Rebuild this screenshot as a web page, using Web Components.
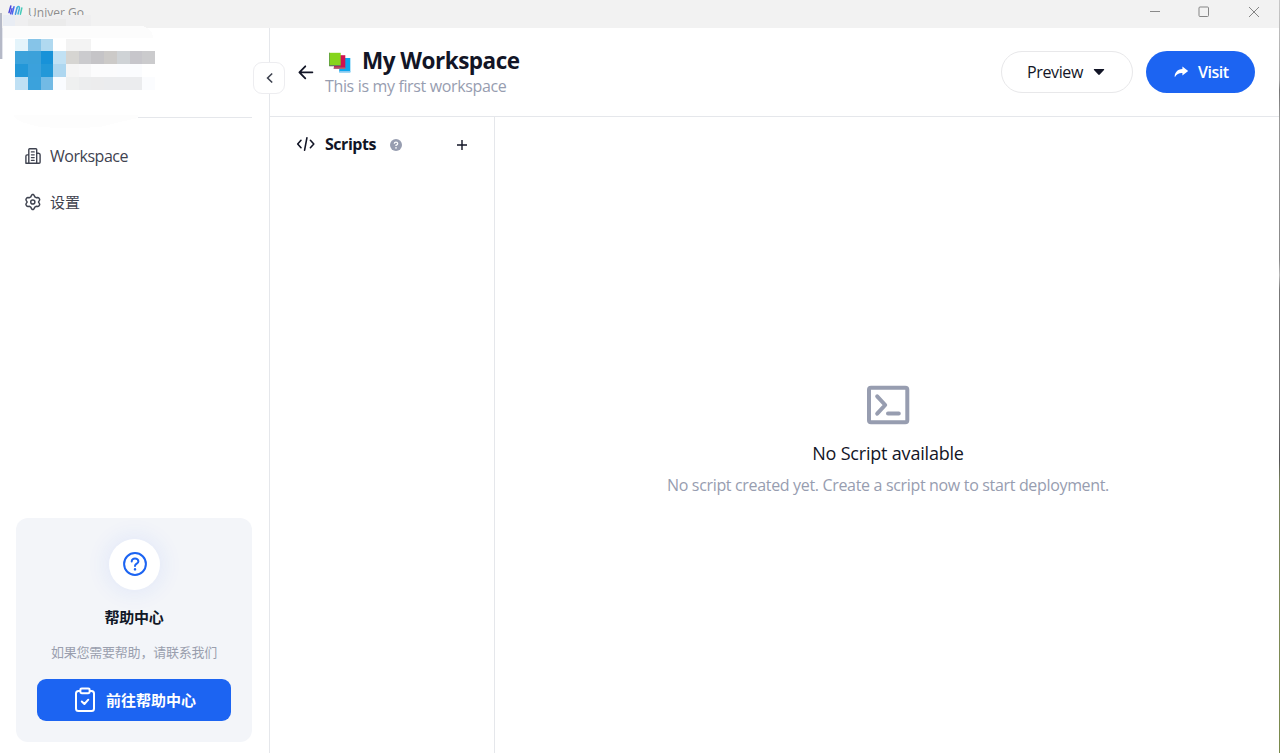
<!DOCTYPE html>
<html lang="zh-CN">
<head>
<meta charset="utf-8">
<title>Univer Go</title>
<style>
html,body{margin:0;height:100%;overflow:hidden;background:#fff}
body{font-family:"Open Sans","Noto Sans CJK SC",sans-serif;color:#111827}
</style>
</head>
<body>
<univer-app></univer-app>
<script>
const define = (name, html, ready) => customElements.define(name, class extends HTMLElement {
  constructor() {
    super();
    const t = document.createElement('template');
    t.innerHTML = html;
    this.attachShadow({ mode: 'open' }).append(t.content.cloneNode(true));
  }
  connectedCallback() { if (ready) ready(this); }
});

/* A single line of text, tracked so that it spans the given width. */
define('ui-text', `<style>:host{display:block;white-space:nowrap;width:max-content}span{display:inline-block}</style><span><slot></slot></span>`, el => {
  const w = parseFloat(el.getAttribute('span'));
  if (!w) return;
  const fit = () => {
    el.style.letterSpacing = '0px';
    const s = el.shadowRoot.querySelector('span');
    const n = el.textContent.length;
    el.style.letterSpacing = ((w - s.getBoundingClientRect().width) / n) + 'px';
  };
  fit();
  requestAnimationFrame(fit);
});

define('title-bar', `<style>
:host{display:flex;height:28px;background:#f2f2f2;align-items:flex-start}
.logo{margin:5px 0 0 8px;flex:none}
ui-text{margin:4px 0 0 5px;font-size:12px;line-height:17px;color:#8d8d8d}
.win{margin-left:auto;display:flex;padding-right:20px}
.win svg{margin-top:6px;display:block}
.win svg+svg{margin-left:37px}
.win svg:last-child{margin-left:38px}
</style>
<svg class="logo" width="15" height="11" viewBox="0 0 15 11" fill="none" stroke-linecap="round" stroke-linejoin="round" stroke-width="1.5">
<path d="M2.8 1L1 7.6" stroke="#4a45d8"/><path d="M4 3.6L2.6 8.8" stroke="#5a55e2"/><path d="M6 1.8L4.2 9" stroke="#4a68ee"/>
<path d="M9 3L7.4 9.3" stroke="#4a9ae0"/><path d="M9 3Q9.8 1 11 1.6Q11.8 2.2 11.3 4L10 9" stroke="#40b4d8"/><path d="M13.8 3L12.4 9.2" stroke="#46cbb8"/></svg>
<ui-text span="56">Univer Go</ui-text>
<div class="win">
<svg width="12" height="12"><path d="M1 5.5H11" stroke="#8a8a8a"/></svg>
<svg width="12" height="12"><rect x="1" y="1" width="9.5" height="9.5" rx="1" fill="none" stroke="#858585"/></svg>
<svg width="12" height="12"><path d="M1 1L11 11M11 1L1 11" stroke="#858585"/></svg>
</div>`);

/* Account block, shown pixelated for privacy. */
define('account-mask', `<style>:host{display:block;position:absolute;left:0;top:0;z-index:3}svg{display:block}</style>
<svg width="170" height="130" shape-rendering="crispEdges">
<path d="M3 15H28L40 18L55 15H91V26H3Z" fill="#efeff0"/>
<path d="M3 15H15V26H3Z" fill="#e9edf4"/>
<path d="M28 19H66V26H28Z" fill="#ebebeb"/>
<path d="M3 26H143Q153 29 153 38H3Z" fill="#fcfcfc"/>
<path d="M14 115H138V118Q118 122 100 127Q70 129 40 127Q20 123 14 117Z" fill="#fdfdfd"/>
<rect y="13" width="2" height="46" fill="#b5b9c7"/>
<rect x="2" y="28" width="1" height="31" fill="#e3e5ec"/>
<g id="m"></g></svg>`, el => {
  const xs = [15, 28, 41, 53, 66, 79, 91, 104, 117, 130, 142, 155];
  const ys = [39, 51, 64, 77, 90];
  const rows = [
    '#e4f4fb #86c4e8 #b0d9f0 #fff #f3f3f3 #f3f3f3',
    '#3ba2db #3ba1da #1892d8 #c1e1f4 #d6d5d2 #cbcbce #c5c4c7 #cccac8 #cfd3d6 #c7c6cb #cbcbcd',
    '#2397d8 #3ba1dc #2398d8 #aed7f0 #f5f5f5 #f7f7f8 #fcfcfd #fcfcfd #fbfcfe #fbfcfe',
    '#bfe0f4 #3ba2dc #72bae5 #fafcff #eff0f0 #ecedee #ececed #ebecee #ebecee #ebecee #fbfcfe'
  ];
  let out = '';
  rows.forEach((r, j) => r.split(' ').forEach((c, i) => {
    const x = xs[i], w = (i < 10 ? xs[i + 1] : 155) - x;
    out += `<rect x="${x}" y="${ys[j]}" width="${w}" height="${ys[j + 1] - ys[j]}" fill="${c}"/>`;
  }));
  el.shadowRoot.getElementById('m').innerHTML = out;
});

define('nav-item', `<style>:host{display:flex;align-items:center;height:24px;font-size:16px;line-height:24px;color:#3f4350}
::slotted(svg){flex:none;margin-right:9px}</style><slot name="icon"></slot><slot></slot>`);

define('help-card', `<style>
:host{display:flex;flex-direction:column;align-items:center;width:236px;height:224px;box-sizing:border-box;padding-top:21px;border-radius:12px;background:#f3f5f9}
.ring{width:51px;height:51px;border-radius:50%;background:#fff;display:flex;justify-content:center;box-shadow:0 0 24px rgba(40,90,245,.11)}
.ring svg{margin:12px 0 0 1px}
.t{font-weight:700;font-size:15px;line-height:22px;margin-top:16px;color:#111827}
.s{font-size:13px;line-height:20px;margin-top:14px;color:#9a9fae}
button{all:unset;box-sizing:border-box;display:flex;align-items:center;width:194px;height:42px;margin-top:17px;padding-left:37px;background:#1c64f2;color:#fff;border-radius:9px;font-weight:700;font-size:15px;line-height:22px}
button svg{margin-right:10px}
</style>
<div class="ring"><svg width="26" height="26" viewBox="0 0 26 26" fill="none" stroke="#1c64f2" stroke-width="2" stroke-linecap="round"><circle cx="13" cy="13" r="10.9"/><path d="M9.7 10.6C9.7 8.6 11.2 7.6 13 7.6S16.4 8.8 16.4 10.4C16.4 12.6 13 12.7 13 14.9"/><path d="M13 18.3v.1" stroke-width="2.4"/></svg></div>
<ui-text class="t" span="59">帮助中心</ui-text>
<ui-text class="s" span="166">如果您需要帮助，请联系我们</ui-text>
<button><svg width="22" height="26" viewBox="0 0 22 26" fill="none" stroke="#fff" stroke-width="2" stroke-linejoin="round" stroke-linecap="round"><path d="M6.3 4H4.5Q2 4 2 6.5V21.5Q2 24 4.5 24H17.5Q20 24 20 21.5V6.5Q20 4 17.5 4H15.7"/><rect x="6.3" y="1.6" width="9.4" height="4.6" rx="1.4"/><path d="M7.8 14.5L10.4 17L14.3 12.7"/></svg><ui-text span="90">前往帮助中心</ui-text></button>`);

define('side-bar', `<style>
:host{display:flex;flex-direction:column;width:269px;border-right:1px solid #e5e7eb;flex:none;position:relative}
.acct{height:89px;margin:0 17px 0 16px;border-bottom:1px solid #e5e7eb}
nav{display:flex;flex-direction:column;gap:22px;padding:26px 0 0 24px}
help-card{margin:auto 0 11px 16px}
.col{position:absolute;left:253px;top:34px;width:32px;height:32px;box-sizing:border-box;border:1px solid #ededf0;border-radius:9px;background:#fff;display:grid;place-items:center;z-index:4}
.col svg{margin-left:1px}
</style>
<div class="acct"></div>
<nav>
<nav-item><svg slot="icon" width="17" height="18" viewBox="0 0 17 18" fill="none" stroke="#3f4350" stroke-width="1.4" stroke-linejoin="round" stroke-linecap="round"><path d="M4.8 16.2V2.5Q4.8 1.7 5.6 1.7H11.9Q12.7 1.7 12.7 2.5V16.2M1.9 16.2V9.2Q1.9 8 3.1 7.9H4.8M12.7 6.2H14.5Q16.1 6.3 16.1 7.8V15.2Q16.1 16.2 15.1 16.2H2.9Q1.9 16.2 1.9 15.2"/><path d="M7.4 4.9H10.2M7.4 7.8H10.2M7.4 10.6H10.2M7.4 13.3H10.2" stroke-width="1.3"/></svg><ui-text span="78">Workspace</ui-text></nav-item>
<nav-item><svg slot="icon" width="17" height="18" viewBox="0.6 1 22 22" fill="none" stroke="#3f4350" stroke-width="1.9" stroke-linejoin="round"><circle cx="12" cy="12" r="2.7"/><path d="M10 4L11 2.3H13L14 4L14.6 5.4L16.3 6.4L18.3 6.2L19.9 6.8L20.9 8.6L20.5 10.2L19.5 11.5V12.5L20.5 13.8L20.9 15.4L19.9 17.2L18.3 17.8L16.3 17.6L14.6 18.6L14 20L13 21.7H11L10 20L9.4 18.6L7.7 17.6L5.7 17.8L4.1 17.2L3.1 15.4L3.5 13.8L4.5 12.5V11.5L3.5 10.2L3.1 8.6L4.1 6.8L5.7 6.2L7.7 6.4L9.4 5.4Z"/></svg><ui-text style="font-size:15px" span="30">设置</ui-text></nav-item>
</nav>
<help-card></help-card>
<div class="col"><svg width="8" height="12" viewBox="0 0 8 12"><path d="M6.2 1.5L1.6 6L6.2 10.5" fill="none" stroke="#3f4350" stroke-width="1.6"/></svg></div>`);

define('work-header', `<style>
:host{display:flex;height:88px;border-bottom:1px solid #e5e7eb;align-items:flex-start}
.back{margin:36px 0 0 28px;flex:none}
.info{margin:19px 0 0 11px}
.row{display:flex;align-items:center;height:28px}
.row svg{margin:4px 0 0 4px}
h1{margin:0 0 0 10px;font-weight:700;font-size:22.5px;line-height:28px;color:#121526}
.sub{font-size:16px;line-height:22px;color:#979db0}
.acts{margin:23px 25px 0 auto;display:flex;gap:13px}
button{all:unset;box-sizing:border-box;height:42px;display:flex;align-items:center;border-radius:21px;font-size:16px;line-height:24px}
.p{width:132px;border:1px solid #e8e8ea;padding-left:25px;gap:10px;color:#121526}
.v{width:109px;background:#1c64f2;color:#fff;padding-left:28px;gap:9px;font-weight:600}
</style>
<svg class="back" width="16" height="16" viewBox="0 0 16 16" fill="none" stroke="#121526" stroke-width="1.8" stroke-linecap="round" stroke-linejoin="round"><path d="M14.4 8.3H1.5M7.3 2.3L1.4 8.3L7.3 14.3"/></svg>
<div class="info"><div class="row">
<svg width="23" height="22" viewBox="0 0 23 22"><path d="M10.2 6H21.3V20.3H10.2Z" fill="#0da7ee"/><path d="M10.2 19H21.3V20.5H10.2Z" fill="#8bc8ef"/><path d="M5 3.2H16.3V16H5Z" fill="#cf124f"/><path d="M4.6 15.4H16.3V17H4.6Z" fill="#a96b79"/><path d="M.2 .8H11.7V13.2H.2Z" fill="#86d51c"/><path d="M.2 13H11.7V14.3H.2Z" fill="#667b61"/><path d="M0 .8H.8V14H0Z" fill="#5b9a3e"/></svg>
<h1><ui-text span="157.5">My Workspace</ui-text></h1></div>
<ui-text class="sub" span="181.5">This is my first workspace</ui-text></div>
<div class="acts"><button class="p"><ui-text span="56">Preview</ui-text><svg width="12" height="8" viewBox="0 0 12 8"><path d="M1.2 1H10.8Q11.6 1.3 11 2L6.8 6.6Q6 7.3 5.2 6.6L1 2Q.4 1.3 1.2 1Z" fill="#121526"/></svg></button>
<button class="v"><svg width="15" height="12" viewBox="0 0 15 12"><path d="M8.4 .4L14.2 4.9L8.4 9.4V6.9C5.2 6.7 2.8 7.8 .8 11.3C.2 7 3.3 3.1 8.4 2.9Z" fill="#fff"/></svg><ui-text span="30.5">Visit</ui-text></button></div>`);

define('script-panel', `<style>
:host{display:block;width:224px;border-right:1px solid #e5e7eb;flex:none}
.bar{display:flex;align-items:center;height:24px;margin-top:15px;padding-left:26px}
ui-text{font-size:16px;line-height:24px;font-weight:700;color:#121526;margin-left:10px}
.q{margin-left:14px}.plus{margin-left:54px}
.q,.plus{position:relative;top:.5px}
</style>
<div class="bar"><svg width="19" height="16" viewBox="0 0 19 16" fill="none" stroke="#121526" stroke-width="1.6" stroke-linecap="round" stroke-linejoin="round"><path d="M5 4.3L1.7 8L5 11.7M14.4 4.3L17.8 8L14.4 11.7M10.9 1.9L8.6 14.1"/></svg>
<ui-text span="51">Scripts</ui-text>
<svg class="q" width="12" height="12" viewBox="0 0 12 12"><circle cx="6" cy="6" r="6" fill="#979db0"/><path d="M4.3 4.8Q4.4 3.2 6 3.2T7.7 4.7Q7.6 5.6 6 6.3V7.1" fill="none" stroke="#fff" stroke-width="1.3"/><circle cx="6" cy="8.9" r=".8" fill="#fff"/></svg>
<svg class="plus" width="12" height="12"><path d="M6 1V11M1 6H11" stroke="#121526" stroke-width="1.4" fill="none"/></svg></div>`);

define('empty-state', `<style>
:host{display:flex;flex:1;flex-direction:column;align-items:center;padding-top:268px;margin-left:1px}
.t{font-size:18px;line-height:26px;color:#121526;margin-top:15px}
.s{font-size:16px;line-height:24px;color:#979db0;margin-top:7px}
</style>
<svg width="44" height="40" viewBox="0 0 44 40" fill="none" stroke="#979db0" stroke-width="4" stroke-linecap="round" stroke-linejoin="round"><rect x="3" y="2.8" width="38.3" height="34.4" rx="2"/><path d="M11.2 11.3L19.2 20L11.2 28.7M22 28.5H32.8"/></svg>
<ui-text class="t" span="151.5">No Script available</ui-text>
<ui-text class="s" span="442">No script created yet. Create a script now to start deployment.</ui-text>`);

define('univer-app', `<style>
:host{display:flex;flex-direction:column;width:1280px;height:753px;position:relative;overflow:hidden;background:#fff}
.body,.work{display:flex;flex:1;min-height:0}
main{display:flex;flex-direction:column;flex:1;min-width:0}
.edge{position:absolute;right:0;top:0;width:1px;height:100%;background:linear-gradient(#c8c8c8 0,#a8a8a8 80px,#777 90px,#999 120px,#888 260px,#bbb 275px,#777 290px,#777 400px,#555 460px,#76805c 480px,#7f8a58 600px,#7a8a4c 753px);z-index:5}
</style>
<title-bar></title-bar><account-mask></account-mask>
<div class="body"><side-bar></side-bar><main><work-header></work-header><div class="work"><script-panel></script-panel><empty-state></empty-state></div></main></div>
<div class="edge"></div>`);
</script>
</body>
</html>
